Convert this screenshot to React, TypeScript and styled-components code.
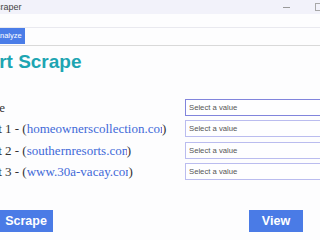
import styled, { createGlobalStyle } from 'styled-components';

const GlobalStyle = createGlobalStyle`
  html, body {
    margin: 0;
    padding: 0;
    background: #fdfdfe;
    overflow: hidden;
  }
`;

const Viewport = styled.div`
  width: 320px;
  height: 240px;
  overflow: hidden;
  background: #fdfdfe;
`;

// the app window is wider than the shot, so it sits a little to the left
const Frame = styled.div`
  width: 420px;
  margin-left: -50px;
  display: flex;
  flex-direction: column;
`;

const TitleBar = styled.div`
  height: 14px;
  display: flex;
  align-items: center;
  padding: 0 47px 0 40px;
  background: #f2f2fa;
  font: 9px "Liberation Sans", Arial, sans-serif;
  color: #444;
`;

const Controls = styled.div`
  margin-left: auto;
  display: flex;
  align-items: center;
  gap: 25px;
`;

const MinBtn = styled.span`
  width: 7px;
  height: 1px;
  background: #9a9a9a;
`;

const MaxBtn = styled.span`
  width: 6px;
  height: 6px;
  border: 1px solid #a8a8a8;
`;

const MenuBand = styled.div`
  height: 13px;
  border-bottom: 1px solid #e9e9ef;
`;

const TabBar = styled.div`
  display: flex;
  padding: 0 0 1px 42px;
  border-bottom: 1px solid #d9d9d9;
`;

const Tab = styled.div<{ $active?: boolean }>`
  height: 16px;
  padding: 0 3px;
  background: ${p => (p.$active ? '#4a7de8' : 'transparent')};
  color: ${p => (p.$active ? '#fff' : '#333')};
  font: 7.5px/16px "Liberation Sans", Arial, sans-serif;
`;

const Heading = styled.h1`
  margin: 5px 0 0;
  padding-left: 9px;
  font: bold 19px/22px "Liberation Sans", Arial, sans-serif;
  color: #1da5b2;
  white-space: nowrap;
`;

const Form = styled.div`
  margin-top: 26px;
  padding-left: 19px;
  display: grid;
  grid-template-columns: 216px 170px;
  grid-auto-rows: 17px;
  row-gap: 4.33px;
  align-items: center;
`;

const Label = styled.div`
  font: 13px/17px "Liberation Serif", "Times New Roman", serif;
  color: #333;
  white-space: nowrap;
`;

const LinkClip = styled.span`
  display: inline-block;
  vertical-align: top;
  overflow: hidden;
  color: #4169d8;
`;

// the site name is drawn a little wider than its box, so its last letter is cut
const LinkText = styled.span<{ $cut: number }>`
  display: inline-block;
  margin-right: -${p => p.$cut}px;
`;

const Select = styled.div<{ $focus?: boolean }>`
  box-sizing: border-box;
  height: 17px;
  padding-left: 3px;
  border: 1px solid ${p => (p.$focus ? '#8184dc' : '#babcef')};
  background: #fefeff;
  font: 7.7px/15px "Liberation Sans", Arial, sans-serif;
  color: #555;
`;

const Actions = styled.div`
  margin-top: 30px;
  display: flex;
  justify-content: space-between;
  padding: 0 67px 0 49px;
`;

const Button = styled.button`
  width: 54px;
  height: 22px;
  padding: 0;
  border: none;
  background: #4a7be6;
  color: #fff;
  font: bold 12.5px "Liberation Sans", Arial, sans-serif;
`;

const targets = [
  { n: 1, site: 'homeownerscollection.com', cut: 8 },
  { n: 2, site: 'southernresorts.com', cut: 5 },
  { n: 3, site: 'www.30a-vacay.com', cut: 7 },
];

export default function App() {
  return (
    <Viewport>
      <GlobalStyle />
      <Frame>
        <TitleBar>
          Scraper
          <Controls>
            <MinBtn />
            <MaxBtn />
          </Controls>
        </TitleBar>
        <MenuBand />
        <TabBar>
          <Tab $active>Analyze</Tab>
        </TabBar>
        <Heading>Smart Scrape</Heading>
        <Form>
          <Label>Source</Label>
          <Select $focus>Select a value</Select>
          {targets.map(t => (
            <>
              <Label key={'l' + t.n}>
                Target {t.n} - (
                <LinkClip>
                  <LinkText $cut={t.cut}>{t.site}</LinkText>
                </LinkClip>
                )
              </Label>
              <Select key={'s' + t.n}>Select a value</Select>
            </>
          ))}
        </Form>
        <Actions>
          <Button>Scrape</Button>
          <Button>View</Button>
        </Actions>
      </Frame>
    </Viewport>
  );
}
